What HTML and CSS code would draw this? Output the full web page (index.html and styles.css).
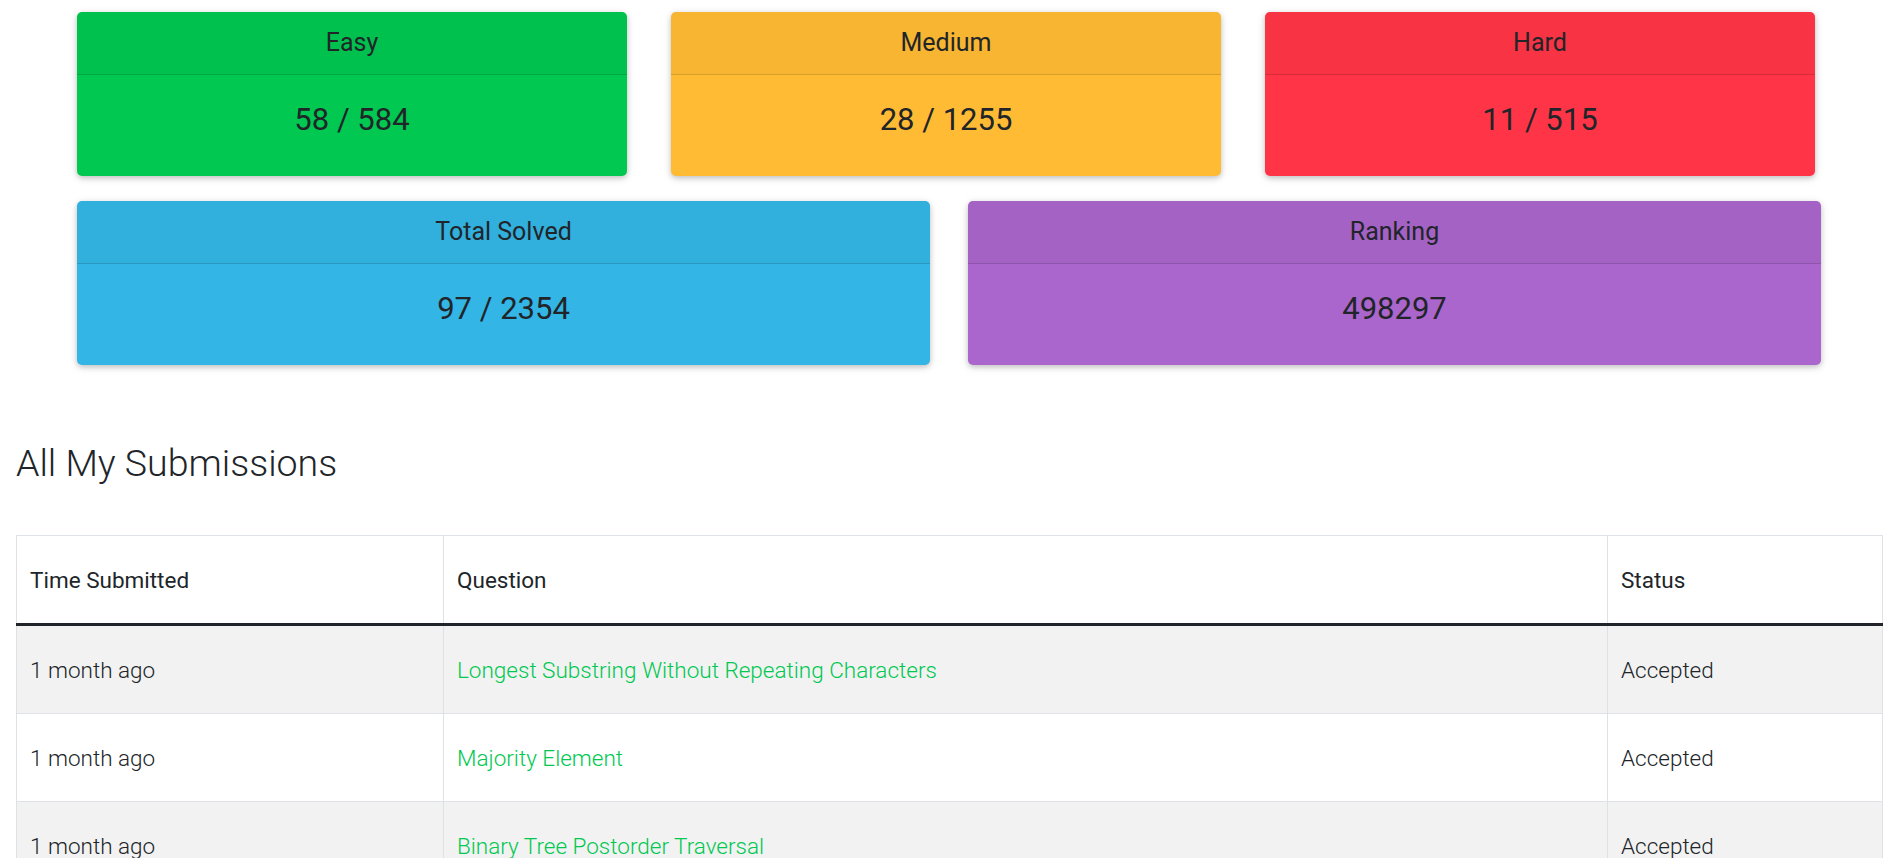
FILE: index.html
```html
<!DOCTYPE html>
<html lang="en">
<head>
<meta charset="utf-8">
<title>Profile</title>
<link rel="stylesheet" href="styles.css">
</head>
<body>
<main class="page">
  <section class="stats">
    <div class="row row-three">
      <div class="card card-success">
        <div class="card-header">Easy</div>
        <div class="card-body">58 / 584</div>
      </div>
      <div class="card card-warning">
        <div class="card-header">Medium</div>
        <div class="card-body">28 / 1255</div>
      </div>
      <div class="card card-danger">
        <div class="card-header">Hard</div>
        <div class="card-body">11 / 515</div>
      </div>
    </div>
    <div class="row row-two">
      <div class="card card-info">
        <div class="card-header">Total Solved</div>
        <div class="card-body">97 / 2354</div>
      </div>
      <div class="card card-secondary">
        <div class="card-header">Ranking</div>
        <div class="card-body">498297</div>
      </div>
    </div>
  </section>

  <h2 class="section-title">All My Submissions</h2>

  <table class="subs">
    <colgroup>
      <col class="c-time">
      <col class="c-question">
      <col class="c-status">
    </colgroup>
    <thead>
      <tr>
        <th>Time Submitted</th>
        <th>Question</th>
        <th>Status</th>
      </tr>
    </thead>
    <tbody>
      <tr>
        <td>1 month ago</td>
        <td><a href="#">Longest Substring Without Repeating Characters</a></td>
        <td>Accepted</td>
      </tr>
      <tr>
        <td>1 month ago</td>
        <td><a href="#">Majority Element</a></td>
        <td>Accepted</td>
      </tr>
      <tr>
        <td>1 month ago</td>
        <td><a href="#">Binary Tree Postorder Traversal</a></td>
        <td>Accepted</td>
      </tr>
      <tr>
        <td>1 month ago</td>
        <td><a href="#">Two Sum</a></td>
        <td>Accepted</td>
      </tr>
    </tbody>
  </table>
</main>
</body>
</html>
```

FILE: styles.css
```css
html {
  overflow: hidden;
}

body {
  margin: 0;
  background: #ffffff;
  color: #212529;
  font-family: Roboto, "Noto Sans", "Liberation Sans", sans-serif;
}

.page {
  padding-top: 12px;
}

.stats {
  display: flex;
  flex-direction: column;
  gap: 25px;
  padding-left: 77px;
}

.row {
  display: grid;
}

.row-three {
  grid-template-columns: repeat(3, 550px);
  column-gap: 44px;
}

.row-two {
  grid-template-columns: repeat(2, 853px);
  column-gap: 38px;
}

.card {
  border-radius: 5px;
  overflow: hidden;
  box-shadow: 0 2px 5px 0 rgba(0, 0, 0, 0.16), 0 2px 10px 0 rgba(0, 0, 0, 0.12);
  text-align: center;
  color: #212529;
}

.card-header {
  height: 62px;
  line-height: 62px;
  font-size: 25px;
  font-weight: 400;
  background: rgba(0, 0, 0, 0.03);
  border-bottom: 1px solid rgba(0, 0, 0, 0.125);
}

.card-body {
  height: 101px;
  box-sizing: border-box;
  padding-top: 27px;
  line-height: 36px;
  font-size: 31px;
  font-weight: 400;
}

.card-success { background: #00c851; }
.card-warning { background: #ffbb33; }
.card-danger { background: #ff3547; }
.card-info { background: #33b5e5; }
.card-secondary { background: #aa66cc; }

.section-title {
  margin: 76px 0 49px 0;
  padding-left: 16px;
  font-size: 37.5px;
  line-height: 45px;
  font-weight: 300;
  color: #212529;
}

.subs {
  margin-left: 16px;
  width: 1866px;
  table-layout: fixed;
  border-collapse: collapse;
  font-size: 22.5px;
}

.c-time { width: 427px; }
.c-question { width: 1164px; }
.c-status { width: 275px; }

.subs th,
.subs td {
  border: 1px solid #dee2e6;
  padding: 0 13px;
  text-align: left;
  vertical-align: middle;
  line-height: 32px;
  white-space: nowrap;
}

.subs th {
  height: 87px;
  font-weight: 400;
  border-bottom: 3px solid #212529;
}

.subs td {
  height: 87px;
  font-weight: 300;
}

.subs tbody tr:nth-child(odd) {
  background: #f2f2f2;
}

.subs a {
  color: #00c851;
  text-decoration: none;
  font-weight: 300;
}
```
